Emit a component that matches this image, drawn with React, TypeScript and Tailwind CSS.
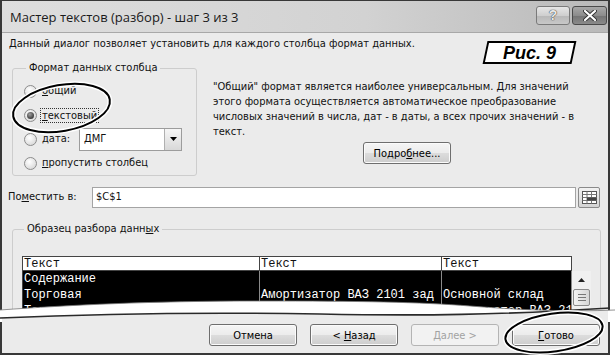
import React from "react";

const UI = "font-['DejaVu_Sans_Condensed','Liberation_Sans',sans-serif]";
const MONO = "font-['Liberation_Mono',monospace]";

function Radio({ checked }: { checked?: boolean }) {
  return (
    <span className="w-[13px] h-[13px] rounded-full border border-[#8c8c8c] bg-[radial-gradient(circle_at_40%_35%,#ffffff,#cfcfcf)] flex items-center justify-center shrink-0">
      {checked && (
        <span className="w-[7px] h-[7px] rounded-full bg-[radial-gradient(circle_at_40%_35%,#a0a0a0,#151515)]" />
      )}
    </span>
  );
}

function Btn({ children, disabled }: { children: React.ReactNode; disabled?: boolean }) {
  return (
    <div
      className={
        disabled
          ? "w-[88px] h-[22px] rounded-[3px] border border-[#b4b4b4] bg-[#f2f2f2] text-[#a2a2a2] flex items-center justify-center text-[11px] leading-none"
          : "w-[88px] h-[22px] rounded-[3px] border border-[#6e6e6e] bg-[linear-gradient(#f5f5f5_0%,#ececec_48%,#dcdcdc_52%,#cdcdcd_100%)] shadow-[inset_0_0_0_1px_#fbfbfb] text-black flex items-center justify-center text-[11px] leading-none"
      }
    >
      <span className="whitespace-pre">{children}</span>
    </div>
  );
}

export default function App() {
  const cols = [237, 182, 130];
  const rows = [
    ["Содержание", "", ""],
    ["Торговая", "Амортизатор ВАЗ 2101 зад", "Основной склад"],
    ["Торговая", "Амортизатор ВАЗ 2101 пер", "Амортизатор ВАЗ 2101 зад"],
  ];
  return (
    <div className={`w-[615px] h-[358px] bg-white relative overflow-hidden ${UI} text-[11px] text-[#111]`}>
      <div className="w-[610px] h-[355px] border-l-2 border-r-2 border-b-2 border-t border-[#383838] bg-[#ebebeb] flex flex-col">
        {/* upper piece */}
        <div className="h-[317px] overflow-hidden flex flex-col shrink-0">
          {/* title bar */}
          <div className="h-[32px] shrink-0 flex items-start bg-[linear-gradient(90deg,#dedede_0%,#d2d2d2_60%,#b9b9b9_100%)] border-b border-[#a8a8a8]">
            <div className="pl-[8px] pt-[7px] font-['Open_Sans',sans-serif] text-[13px] leading-[18px] text-[#1a1a1a] flex-1">
              Мастер текстов (разбор) - шаг 3 из 3
            </div>
            <div className="flex mt-[5px] mr-[1px] gap-[2px]">
              <div className="w-[34px] h-[19px] rounded-[3px] border border-[#7a7a7a] bg-[linear-gradient(#e6e6e6_0%,#cfcfcf_50%,#b8b8b8_52%,#c8c8c8_100%)] flex items-center justify-center font-['Liberation_Sans',sans-serif] font-bold text-[14px] text-[#e8e8e8] [text-shadow:0_0_1px_#333,0_0_1px_#333]">
                ?
              </div>
              <div className="w-[35px] h-[19px] rounded-[3px] border border-[#4a4a4a] bg-[linear-gradient(#a8a8a8_0%,#8c8c8c_50%,#747474_52%,#8a8a8a_100%)] flex items-center justify-center">
                <svg width="14" height="11" viewBox="0 0 14 11">
                  <path d="M2 1 L12 10 M12 1 L2 10" stroke="#333" strokeWidth="4" strokeLinecap="round" />
                  <path d="M2 1 L12 10 M12 1 L2 10" stroke="#ffffff" strokeWidth="2.2" strokeLinecap="round" />
                </svg>
              </div>
            </div>
          </div>

          {/* intro */}
          <div className="mt-[5px] pl-[7px] h-[12px] leading-[12px] whitespace-nowrap">
            Данный диалог позволяет установить для каждого столбца формат данных.
          </div>

          {/* format row */}
          <div className="mt-[12px] flex shrink-0">
            <fieldset className="ml-[10px] w-[185px] h-[114px] border border-[#cdcdcd] rounded-[3px] pl-[11px]">
              <legend className="px-[3px] ml-[2px] leading-[12px]">Формат данных столбца</legend>
              <div className="flex flex-col mt-[5px]">
                <div className="h-[24px] flex items-center gap-[5px]">
                  <Radio />
                  <span><span className="underline">о</span>бщий</span>
                </div>
                <div className="h-[24px] flex items-center gap-[4px]">
                  <Radio checked />
                  <span className="outline outline-1 outline-dotted outline-[#333] px-[1px] leading-[13px]">
                    <span className="underline">т</span>екстовый
                  </span>
                </div>
                <div className="h-[24px] flex items-center">
                  <Radio />
                  <span className="ml-[5px] w-[37px]"><span className="underline">д</span>ата:</span>
                  <div className="w-[103px] h-[23px] bg-white border border-[#9c9c9c] flex items-center">
                    <span className="pl-[4px] flex-1">ДМГ</span>
                    <div className="w-[17px] h-[21px] border-l border-[#b0b0b0] bg-[linear-gradient(#f6f6f6,#d8d8d8)] flex items-center justify-center">
                      <svg width="7" height="4" viewBox="0 0 7 4">
                        <path d="M0 0 H7 L3.5 4 Z" fill="#000" />
                      </svg>
                    </div>
                  </div>
                </div>
                <div className="h-[24px] flex items-center gap-[5px]">
                  <Radio />
                  <span><span className="underline">п</span>ропустить столбец</span>
                </div>
              </div>
            </fieldset>
            <div className="ml-[16px] mt-[17px] flex flex-col">
              <div className="leading-[15px] whitespace-nowrap">
                <div>"Общий" формат является наиболее универсальным. Для значений</div>
                <div>этого формата осуществляется автоматическое преобразование</div>
                <div>числовых значений в числа, дат - в даты, а всех прочих значений - в</div>
                <div>текст.</div>
              </div>
              <div className="mt-[3px] ml-[150px]">
                <Btn>
                  Подро<span className="underline">б</span>нее...
                </Btn>
              </div>
            </div>
          </div>

          {/* destination */}
          <div className="mt-[11px] h-[21px] flex items-center shrink-0">
            <div className="pl-[6px] w-[90px]">
              По<span className="underline">м</span>естить в:
            </div>
            <div className="w-[484px] h-[21px] bg-white border border-[#a4a4a4] flex items-center pl-[3px]">$C$1</div>
            <div className="ml-[2px] w-[22px] h-[21px] rounded-[2px] border border-[#8a8a8a] bg-[linear-gradient(#f2f2f2,#d4d4d4)] flex items-center justify-center">
              <svg width="15" height="13" viewBox="0 0 15 13">
                <rect x="0.5" y="0.5" width="14" height="12" fill="#fff" stroke="#555" />
                <path d="M0.5 3.5 H14.5 M0.5 6.5 H14.5 M0.5 9.5 H14.5 M5 0.5 V12.5 M9.5 0.5 V12.5" stroke="#777" />
                <rect x="5" y="6.5" width="9" height="3" fill="#444" />
              </svg>
            </div>
          </div>

          {/* preview group */}
          <fieldset className="mt-[15px] ml-[10px] w-[589px] h-[140px] border border-[#cdcdcd] rounded-[3px] pl-[9px] shrink-0">
            <legend className="px-[3px] ml-[2px] leading-[12px]">
              Образец разбора данн<span className="underline">ы</span>х
            </legend>
            <div className="mt-[21px] flex">
              <div className={`flex flex-col border-l border-[#444] ${MONO} text-[12px]`}>
                <div className="flex h-[15px] bg-white border-t border-b border-[#444]">
                  {cols.map((w, i) => (
                    <div key={i} style={{ width: w }} className="border-r border-[#444] pl-[1px] leading-[14px]">
                      Текст
                    </div>
                  ))}
                </div>
                {rows.map((r, ri) => (
                  <div key={ri} className="flex h-[16px] bg-black text-white">
                    {r.map((c, ci) => (
                      <div key={ci} style={{ width: cols[ci] }} className="border-r border-[#8a8a8a] pl-[1px] leading-[16px] whitespace-nowrap overflow-hidden">
                        {c}
                      </div>
                    ))}
                  </div>
                ))}
              </div>
              <div className="w-[19px] mt-[15px] bg-[#f0f0f0] flex flex-col items-center">
                <div className="h-[18px] w-[17px] flex items-center justify-center">
                  <svg width="7" height="4" viewBox="0 0 7 4">
                    <path d="M0 4 H7 L3.5 0 Z" fill="#222" />
                  </svg>
                </div>
                <div className="w-[17px] h-[17px] rounded-[2px] border border-[#8a8a8a] bg-[linear-gradient(90deg,#f4f4f4,#d6d6d6)] flex flex-col items-center justify-center gap-[2px]">
                  <div className="w-[8px] h-[1px] bg-[#777]" />
                  <div className="w-[8px] h-[1px] bg-[#777]" />
                  <div className="w-[8px] h-[1px] bg-[#777]" />
                </div>
              </div>
            </div>
          </fieldset>
        </div>

        {/* lower piece */}
        <div className="flex-1 flex justify-end items-start pt-[6px] pr-[8px] gap-[13px]">
          <Btn>Отмена</Btn>
          <Btn>
            {"< "}
            <span className="underline">Н</span>азад
          </Btn>
          <Btn disabled>{"Далее >"}</Btn>
          <Btn>
            <span className="underline">Г</span>отово
          </Btn>
        </div>
      </div>

      {/* tear, annotations */}
      <svg className="absolute left-0 top-0 pointer-events-none" width="615" height="358" viewBox="0 0 615 358">
        <path
          d="M0 310 C 70 305 150 301 260 301 C 360 301 420 302 470 306 C 520 310 570 312 615 310 L615 322 L0 322 Z"
          fill="#ffffff"
        />
        <path
          d="M2 318 C 90 314 200 312 320 314 C 420 316 500 315 608 308 L608 322 L2 322 Z"
          fill="#ebebeb"
        />
        <path d="M0 318 C 90 314 200 312 320 314 C 420 316 500 315 610 308" fill="none" stroke="#2a2a2a" strokeWidth="1.6" />
        <path d="M0 310 C 70 305 150 301 260 301 C 360 301 420 302 470 306 C 520 310 570 312 615 310" fill="none" stroke="#777" strokeWidth="0.8" />
        <g transform="rotate(-10 61.5 108)">
          <ellipse cx="61.5" cy="108" rx="49" ry="23" fill="none" stroke="#fff" strokeWidth="5" />
          <ellipse cx="61.5" cy="108" rx="49" ry="23" fill="none" stroke="#000" strokeWidth="2" />
        </g>
        <g transform="rotate(-8 554 332.5)">
          <ellipse cx="554" cy="332.5" rx="49" ry="19" fill="none" stroke="#fff" strokeWidth="5" />
          <ellipse cx="554" cy="332.5" rx="49" ry="19" fill="none" stroke="#000" strokeWidth="2" />
        </g>
      </svg>

      <div className="absolute left-[485px] top-[41px] w-[89px] h-[23px] border-2 border-black bg-white -skew-x-12 flex items-center justify-center">
        <span className="skew-x-12 font-['Liberation_Sans',sans-serif] font-bold italic text-[18px] leading-none text-black">
          Рис. 9
        </span>
      </div>
    </div>
  );
}
